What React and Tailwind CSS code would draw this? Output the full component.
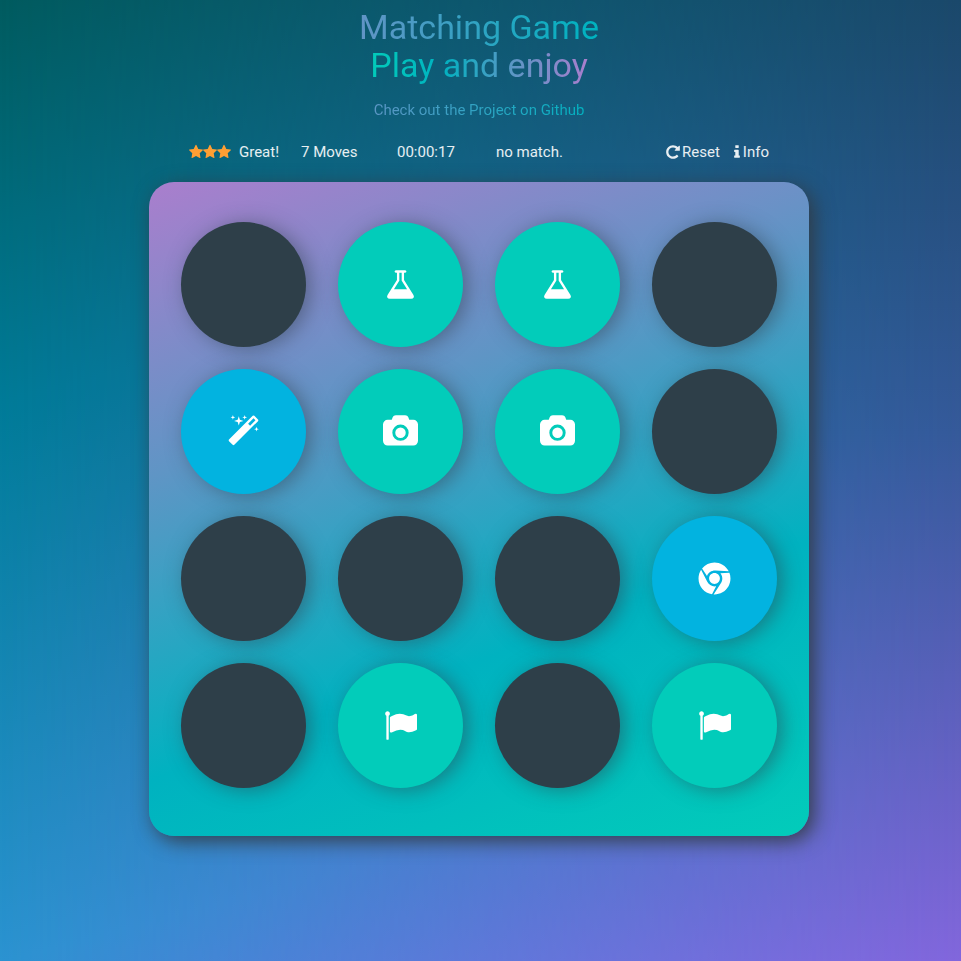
import { FaChrome } from "react-icons/fa";

const ICONS = {
  flask: {
    box: "0 0 1792 1792",
    size: "w-[33px] h-[33px]",
    d: "M1591 1448q56 89 21.5 152.5t-140.5 63.5h-1152q-106 0-140.5-63.5t21.5-152.5l503-793v-399h-64q-26 0-45-19t-19-45 19-45 45-19h512q26 0 45 19t19 45-19 45-45 19h-64v399zm-779-725l-272 429h712l-272-429-20-31v-436h-128v436z",
  },
  camera: {
    box: "0 0 1920 1792",
    size: "w-[35px] h-[33px]",
    d: "M960 672q119 0 203.5 84.5t84.5 203.5-84.5 203.5-203.5 84.5-203.5-84.5-84.5-203.5 84.5-203.5 203.5-84.5zm704-416q106 0 181 75t75 181v896q0 106-75 181t-181 75h-1408q-106 0-181-75t-75-181v-896q0-106 75-181t181-75h224l51-136q19-49 69.5-84.5t103.5-35.5h512q53 0 103.5 35.5t69.5 84.5l51 136h224zm-704 1152q185 0 316.5-131.5t131.5-316.5-131.5-316.5-316.5-131.5-316.5 131.5-131.5 316.5 131.5 316.5 316.5 131.5z",
  },
  flag: {
    box: "0 0 1792 1792",
    size: "w-[33px] h-[33px]",
    d: "M320 256q0 72-64 110v1266q0 13-9.5 22.5t-22.5 9.5h-64q-13 0-22.5-9.5t-9.5-22.5v-1266q-64-38-64-110 0-53 37.5-90.5t90.5-37.5 90.5 37.5 37.5 90.5zm1472 64v763q0 25-12.5 38.5t-39.5 27.5q-215 116-369 116-61 0-123.5-22t-108.5-48-115.5-48-142.5-22q-192 0-464 146-17 9-33 9-26 0-45-19t-19-45v-742q0-32 31-55 21-14 79-43 236-120 421-120 107 0 200 29t219 88q38 19 88 19 54 0 117.5-21t110-47 88-47 54.5-21q26 0 45 19t19 45z",
  },
  magic: {
    box: "0 0 1792 1792",
    size: "w-[33px] h-[33px]",
    d: "M1254 581l293-293-107-107-293 293zm447-293q0 27-18 45l-1286 1286q-18 18-45 18t-45-18l-198-198q-18-18-18-45t18-45l1286-1286q18-18 45-18t45 18l198 198q18 18 18 45zm-1351-190l98 30-98 30-30 98-30-98-98-30 98-30 30-98zm350 162l196 60-196 60-60 196-60-196-196-60 196-60 60-196zm930 478l98 30-98 30-30 98-30-98-98-30 98-30 30-98zm-640-640l98 30-98 30-30 98-30-98-98-30 98-30 30-98z",
  },
  repeat: {
    box: "128 0 1536 1792",
    size: "w-[14px] h-4",
    d: "M1664 256v448q0 26-19 45t-45 19h-448q-42 0-59-40-17-39 14-69l138-138q-148-137-349-137-104 0-198.5 40.5t-163.5 109.5-109.5 163.5-40.5 198.5 40.5 198.5 109.5 163.5 163.5 109.5 198.5 40.5q119 0 225-52t179-147q7-10 23-12 15 0 25 9l137 138q9 8 9.5 20.5t-7.5 22.5q-109 132-264 204.5t-327 72.5q-156 0-298-61t-245-164-164-245-61-298 61-298 164-245 245-164 298-61q147 0 284.5 55.5t244.5 156.5l130-129q29-31 70-14 39 17 39 59z",
  },
  info: {
    box: "576 0 640 1792",
    size: "w-[6px] h-4",
    d: "M1216 1344v128q0 26-19 45t-45 19h-512q-26 0-45-19t-19-45v-128q0-26 19-45t45-19h64v-384h-64q-26 0-45-19t-19-45v-128q0-26 19-45t45-19h384q26 0 45 19t19 45v576h64q26 0 45 19t19 45zm-128-1152v192q0 26-19 45t-45 19h-256q-26 0-45-19t-19-45v-192q0-26 19-45t45-19h256q26 0 45 19t19 45z",
  },
  star: {
    box: "64 0 1664 1792",
    size: "w-[14px] h-4",
    d: "M1728 647q0 22-26 48l-363 354 86 500q1 7 1 20 0 21-10.5 35.5t-30.5 14.5q-19 0-40-12l-449-236-449 236q-22 12-40 12-21 0-31.5-14.5t-10.5-35.5q0-6 2-20l86-500-364-354q-25-27-25-48 0-37 56-46l502-73 225-455q19-41 49-41t49 41l225 455 502 73q56 9 56 46z",
  },
};

function Icon({ name }) {
  if (name === "chrome") return <FaChrome className="h-[33px] w-[33px]" aria-hidden="true" />;
  const icon = ICONS[name];
  return (
    <svg viewBox={icon.box} className={icon.size} fill="currentColor" aria-hidden="true">
      <path d={icon.d} />
    </svg>
  );
}

const CARDS = [
  ["closed"],
  ["match", "flask"],
  ["match", "flask"],
  ["closed"],
  ["open", "magic"],
  ["match", "camera"],
  ["match", "camera"],
  ["closed"],
  ["closed"],
  ["closed"],
  ["closed"],
  ["open", "chrome"],
  ["closed"],
  ["match", "flag"],
  ["closed"],
  ["match", "flag"],
];

const CARD_COLORS = {
  closed: "bg-[#2e3f49]",
  match: "bg-[#02ccba]",
  open: "bg-[#02b3e0]",
};

function Card({ state, icon }) {
  return (
    <button
      type="button"
      aria-label={icon ? icon : "Hidden card"}
      className={`flex aspect-square w-full items-center justify-center rounded-full text-white shadow-[5px_2px_20px_0_rgba(46,61,73,0.5)] ${CARD_COLORS[state]}`}
    >
      {icon && <Icon name={icon} />}
    </button>
  );
}

export default function App() {
  return (
    <div className="relative isolate min-h-screen bg-[linear-gradient(165deg,#005b5f_0%,#007b98_33%,#2b93d1_79%,#4a83dd_100%)] pr-[3px] font-['Roboto','Liberation_Sans',sans-serif]">
      <div className="absolute inset-0 -z-10 bg-[linear-gradient(180deg,#1a486a_0%,#35599a_45%,#8266dc_100%)] mask-l-from-0% mask-l-to-100%" />
      <header className="flex flex-col items-center pt-2 text-center">
        <h1 className="w-full max-w-[660px] text-[34px] leading-[38px]">
          <span className="block bg-[linear-gradient(90deg,#aa7ecd_0%,#5f95c5_33%,#00b2c0_67%,#02ccba_100%)] bg-clip-text text-transparent">
            Matching Game
          </span>
          <span className="inline-block bg-[linear-gradient(270deg,#aa7ecd_0%,#5f95c5_33%,#00b2c0_67%,#02ccba_100%)] bg-clip-text text-transparent">
            Play and enjoy
          </span>
        </h1>
        <p className="mt-3.5 w-full max-w-[660px] bg-[linear-gradient(90deg,#aa7ecd_0%,#5f95c5_33%,#00b2c0_67%,#02ccba_100%)] bg-clip-text text-[15px] leading-6 text-transparent">
          Check out the <a href="#github">Project on Github</a>
        </p>
      </header>

      <section className="mx-auto mt-[18px] flex w-full max-w-[580px] items-center text-[15px] leading-6 text-white/90">
        <div className="flex w-28 items-center">
          <span className="flex text-[#ff9f33]" role="img" aria-label="3 stars">
            <Icon name="star" />
            <Icon name="star" />
            <Icon name="star" />
          </span>
          <span className="ml-2">Great!</span>
        </div>
        <span className="w-24">7 Moves</span>
        <span className="w-[99px]">00:00:17</span>
        <span className="flex-1">no match.</span>
        <button type="button" className="flex items-center gap-0.5">
          <Icon name="repeat" />
          Reset
        </button>
        <button type="button" className="ml-3.5 flex items-center gap-[3px]">
          <Icon name="info" />
          Info
        </button>
      </section>

      <main className="mx-auto mt-[18px] grid w-full max-w-[660px] grid-cols-4 gap-x-8 gap-y-[22px] rounded-[25px] bg-[linear-gradient(160deg,#aa7ecd_0%,#5f95c5_33%,#00b2c0_67%,#02ccba_100%)] px-8 pt-10 pb-12 shadow-[5px_5px_20px_0_rgba(50,58,66,0.95)]">
        {CARDS.map(([state, icon], i) => (
          <Card key={i} state={state} icon={icon} />
        ))}
      </main>
    </div>
  );
}
